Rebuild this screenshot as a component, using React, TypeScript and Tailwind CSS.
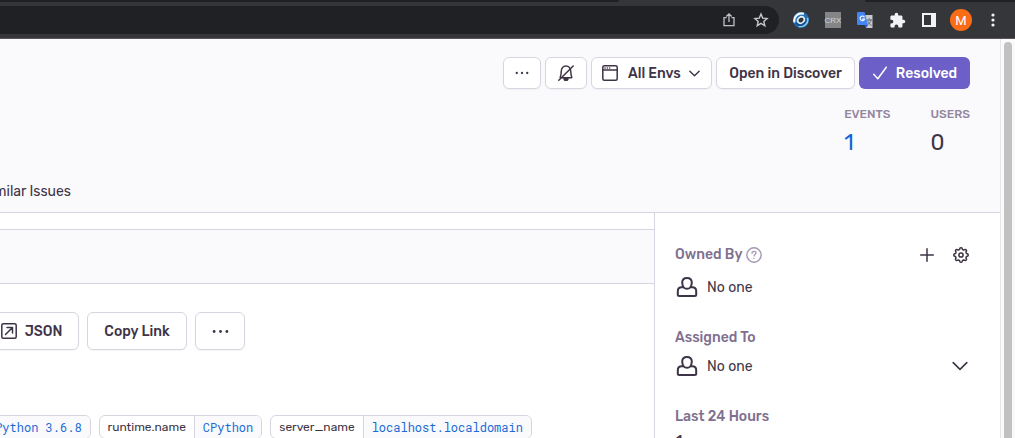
import React from "react";

type IconProps = { className?: string; children: React.ReactNode; box?: number };

function Icon({ className = "size-4", children, box = 16 }: IconProps) {
  return (
    <svg
      aria-hidden="true"
      viewBox={`0 0 ${box} ${box}`}
      className={`shrink-0 ${className}`}
      fill="none"
      stroke="currentColor"
      strokeWidth="1.5"
      strokeLinecap="round"
      strokeLinejoin="round"
    >
      {children}
    </svg>
  );
}

const Dots = ({ className }: { className?: string }) => (
  <Icon className={className}>
    <g fill="currentColor" stroke="none">
      <circle cx="2" cy="8" r="1.3" />
      <circle cx="8" cy="8" r="1.3" />
      <circle cx="14" cy="8" r="1.3" />
    </g>
  </Icon>
);

const Chevron = ({ className, weight = 1.6 }: { className?: string; weight?: number }) => (
  <Icon className={className}>
    <path strokeWidth={weight} d="M1.2 4.6 8 11.4l6.8-6.8" />
  </Icon>
);

const Person = () => (
  <Icon className="size-6" box={24}>
    <path
      strokeWidth="2"
      d="M8.600 12.300C7.700 11.100 7.200 9.500 7.200 7.600 7.200 4.700 9 3 12 3s4.800 1.700 4.800 4.600c0 1.900-.5 3.500-1.400 4.700M8.600 12.300c.9 1 2 1.500 3.400 1.500s2.500-.5 3.400-1.500M8.600 12.300H6.700c-2.500 0-3.900 1.500-3.900 3.900v3.400c0 .9.6 1.500 1.500 1.500h15.400c.9 0 1.500-.6 1.500-1.500v-3.400c0-2.400-1.400-3.900-3.900-3.900h-1.900"
    />
  </Icon>
);

function gearPath() {
  const points: string[] = [];
  for (let i = 0; i <= 96; i++) {
    const a = (i / 96) * Math.PI * 2;
    const r = 6.4 + 0.8 * Math.tanh(2.2 * Math.cos(8 * a));
    points.push(`${(8 + r * Math.cos(a)).toFixed(2)} ${(8 + r * Math.sin(a)).toFixed(2)}`);
  }
  return `M${points.join("L")}Z`;
}

function BrowserBar() {
  const slot = "flex size-8 shrink-0 items-center justify-center";
  return (
    <header className="shrink-0 border-b border-[#5b5459] bg-[#35363a]">
      <div className="flex h-[2px] justify-between">
        <div className="w-[61%] rounded-br-full bg-[#202124]" />
        <div className="w-[150px] rounded-bl-full bg-[#202124]" />
      </div>
      <div className="flex h-9 items-center pr-[6px]">
        <div className="flex h-7 min-w-0 flex-1 items-center rounded-r-full bg-[#202124] pr-[2px]">
          <input aria-label="Address" className="h-7 min-w-0 flex-1 bg-transparent px-3 text-sm text-white outline-none" />
          <button aria-label="Share" className={`${slot} text-[#bdc1c6]`}>
            <Icon>
              <path strokeLinecap="butt" strokeLinejoin="miter" strokeWidth="1.3" d="M5.500 5.700H3v8h10v-8h-2.500M8 10V1.800M5.300 4.500 8 1.800l2.700 2.700" />
            </Icon>
          </button>
          <button aria-label="Bookmark" className={`${slot} text-[#c6c9cc]`}>
            <Icon>
              <path strokeLinejoin="miter" strokeWidth="1.400" d="m8 2 1.700 4.100 4.400.4-3.300 2.900 1 4.300L8 11.400l-3.800 2.300 1-4.300-3.300-2.900 4.400-.4z" />
            </Icon>
          </button>
        </div>
        <div className="ml-[6px] flex items-center">
          <button aria-label="Sync extension" className={slot}>
            <Icon>
              <circle cx="8" cy="8" r="8" fill="#2472b8" stroke="none" />
              <path d="M1.300 9.500C.6 4.800 4.800.7 10 1.600" stroke="#f0f8fd" strokeWidth="2.200" />
              <path d="M14.600 6.500c.8 4.700-3.200 8.600-8.200 7.900" stroke="#8ec9ec" strokeWidth="1.700" />
              <path d="M3.500 11.800c3 2.500 8.500 1.200 9.200-4" stroke="#11518f" strokeWidth="2" />
              <ellipse cx="8" cy="8" rx="3.600" ry="2.900" transform="rotate(-40 8 8)" fill="#35363a" stroke="#e6f5fd" strokeWidth="1.500" />
            </Icon>
          </button>
          <button aria-label="CRX extension" className={slot}>
            <span className="flex size-4 items-center justify-center bg-[#858585] font-['Liberation_Sans',sans-serif] text-[8px] text-[#d4d4d4]">CRX</span>
          </button>
          <button aria-label="Translate" className={slot}>
            <Icon>
              <path d="M7 3h8.500v13H9z" fill="#c9cbce" stroke="none" />
              <path d="M9.500 8H15M12.200 6.700V8M14 8c-.4 2.200-1.800 4-3.800 5M10.800 9.500c.8 1.700 2 3 3.500 3.700" stroke="#5f6f7d" strokeWidth="1" />
              <path d="M1 0h6.500L11 13H1a1 1 0 0 1-1-1V1a1 1 0 0 1 1-1z" fill="#4285f4" stroke="none" />
              <path d="m7.500 13h3.500l-2 3z" fill="#2559c7" stroke="none" />
              <path d="M7.200 4.900A2.300 2.300 0 1 0 7.600 7H5.500" stroke="#fff" strokeWidth="1.100" />
            </Icon>
          </button>
          <button aria-label="Extensions" className={`${slot} text-[#f1f3f4]`}>
            <Icon box={24} className="size-[17px]">
              <path
                fill="currentColor"
                stroke="none"
                d="M20.500 11H19V7c0-1.100-.9-2-2-2h-4V3.500a2.500 2.500 0 0 0-5 0V5H4c-1.100 0-2 .9-2 2v3.800h1.500a2.700 2.700 0 0 1 0 5.400H2V20c0 1.100.9 2 2 2h3.800v-1.500a2.700 2.700 0 0 1 5.400 0V22H17c1.100 0 2-.9 2-2v-4h1.500a2.500 2.500 0 0 0 0-5z"
              />
            </Icon>
          </button>
          <button aria-label="Side panel" className={`${slot} text-[#f1f3f4]`}>
            <Icon>
              <path fill="currentColor" stroke="none" fillRule="evenodd" d="M1 1h14v14H1zM3 3v10h7V3z" />
            </Icon>
          </button>
          <button aria-label="Profile" className={slot}>
            <span className="flex size-[22px] items-center justify-center rounded-full bg-[#fa6d16] font-[Roboto,sans-serif] text-[13px] text-white">M</span>
          </button>
          <button aria-label="Browser menu" className={`${slot} text-[#f1f3f4]`}>
            <Icon>
              <g fill="currentColor" stroke="none">
                <circle cx="8" cy="3" r="1.600" />
                <circle cx="8" cy="8" r="1.600" />
                <circle cx="8" cy="13" r="1.600" />
              </g>
            </Icon>
          </button>
        </div>
      </div>
    </header>
  );
}

const surface = "flex items-center rounded-md border border-[#d9d5e0] bg-white font-medium shadow-[0_1px_1px_rgba(43,34,51,0.04)]";
const box = `${surface} justify-center`;

function IssueHeader() {
  return (
    <section className="border-b border-[#d9d5e0] bg-[#fafafc] pt-[18px]">
      <div className="flex justify-end gap-1 pr-[30px]">
        <button aria-label="More actions" className={`${box} h-8 w-[38px]`}>
          <Dots className="size-[14px]" />
        </button>
        <button aria-label="Mute" className={`${box} h-8 w-[42px]`}>
          <Icon>
            <path d="M2.800 12.700h10.400c.5 0 .7-.3.5-.8-.6-1-.8-2.300-.9-5.200C12.700 3.400 10.800.9 8 .9S3.300 3.400 3.200 6.700c-.1 2.900-.3 4.200-.9 5.200-.2.500 0 .8.500.8z" />
            <path d="M6 13.500a2 2 0 0 0 4 0zM.8 15.200 15.200 1" fill="currentColor" />
          </Icon>
        </button>
        <div className={`${surface} h-8 w-[121px] gap-2 pl-[10px]`}>
          <Icon>
            <rect x=".8" y=".8" width="14.400" height="14.400" rx="1.500" />
            <path d="M.8 5h14.400" />
            <path d="M3 3h.1M5.300 3h.1M7.600 3h.1" />
          </Icon>
          <select aria-label="Environment" className="appearance-none bg-transparent pl-[2px] font-medium outline-none">
            <option>All Envs</option>
          </select>
          <Chevron className="size-[11px]" weight={2} />
        </div>
        <button className={`${box} h-8 w-[139px]`}>Open in Discover</button>
        <button className="flex h-8 w-[111px] items-center justify-center gap-2 rounded-md bg-[#6c5fc7] font-medium text-white">
          <Icon>
            <path d="m1.700 9.300 4.100 4.500L14.300 2.200" />
          </Icon>
          Resolved
        </button>
      </div>
      <dl className="mt-4 flex justify-end gap-10 pr-[30px]">
        <div>
          <dt className="text-[12px] leading-[18px] font-medium text-[#9386a0]">EVENTS</dt>
          <dd className="mt-2 text-[22px] leading-6">
            <a href="#events" className="text-[#0f66d6]">1</a>
          </dd>
        </div>
        <div>
          <dt className="text-[12px] leading-[18px] font-medium text-[#9386a0]">USERS</dt>
          <dd className="mt-2 text-[22px] leading-6">0</dd>
        </div>
      </dl>
      <nav className="mt-6 flex h-[33px] w-[71px] justify-end overflow-hidden whitespace-nowrap">
        <a href="#similar" className="leading-[26px]">Similar Issues</a>
      </nav>
    </section>
  );
}

function Tag({ name, value }: { name: string; value: string }) {
  return (
    <li className="flex h-6 shrink-0 overflow-hidden rounded-md border border-[#d9d5e0] text-[12px] leading-[22px]">
      <span className="px-2">{name}</span>
      <a href="#tag" className="border-l border-[#d9d5e0] bg-[#fafafc] px-2 font-['Roboto_Mono','Liberation_Mono',monospace] text-[#1a6cd8]">
        {value}
      </a>
    </li>
  );
}

function EventColumn() {
  return (
    <main className="min-w-0 flex-1 overflow-hidden">
      <div className="mt-4 h-[55px] border-y border-[#d9d5e0] bg-[#fafafc]" />
      <div className="mt-7 -ml-4 flex gap-2">
        <button className={`${box} h-[38px] w-[95px] gap-2`}>
          <Icon>
            <rect x=".8" y=".8" width="14.400" height="14.400" rx="1.500" />
            <path d="m4.500 11.500 6.800-6.800M6 4.500h5.500V10" />
          </Icon>
          JSON
        </button>
        <button className={`${box} h-[38px] w-[100px]`}>Copy Link</button>
        <button aria-label="More event actions" className={`${box} h-[38px] w-[50px]`}>
          <Dots className="size-[17px]" />
        </button>
      </div>
      <ul className="mt-[65px] -ml-[82px] flex gap-2">
        <Tag name="runtime" value="CPython 3.6.8" />
        <Tag name="runtime.name" value="CPython" />
        <Tag name="server_name" value="localhost.localdomain" />
      </ul>
    </main>
  );
}

function Sidebar() {
  const heading = "font-medium text-[#80708f]";
  return (
    <aside className="w-[346px] shrink-0 border-l border-[#d9d5e0] px-5 pt-[31px]">
      <div className="flex items-center pr-[11px]">
        <h2 className={heading}>Owned By</h2>
        <button aria-label="About ownership" className="ml-1 text-[#a598b4]">
          <Icon>
            <circle cx="8" cy="8" r="7.200" strokeWidth="1.400" />
            <path strokeWidth="1.300" d="M6 6.300c0-1.100.9-1.900 2-1.900s2 .7 2 1.700c0 1.300-2 1.400-2 2.800M8 11.300v.1" />
          </Icon>
        </button>
        <button aria-label="Add owner" className="ml-auto">
          <Icon>
            <path d="M8 1.700v12.600M1.700 8h12.600" />
          </Icon>
        </button>
        <button aria-label="Ownership settings" className="ml-[18px]">
          <Icon>
            <path d={gearPath()} strokeWidth="1.500" />
            <circle cx="8" cy="8" r="2.100" strokeWidth="1.500" />
          </Icon>
        </button>
      </div>
      <div className="mt-[10px] flex items-center gap-2">
        <Person />
        <span>No one</span>
      </div>
      <h2 className={`${heading} mt-7`}>Assigned To</h2>
      <div className="mt-[6px] flex items-center gap-2 pr-3">
        <Person />
        <select aria-label="Assigned To" className="min-w-0 flex-1 appearance-none bg-transparent outline-none">
          <option>No one</option>
        </select>
        <Chevron className="size-4" />
      </div>
      <h2 className={`${heading} mt-7`}>Last 24 Hours</h2>
      <p className="mt-[3px] text-[18px] leading-6">1</p>
    </aside>
  );
}

export default function App() {
  return (
    <div className="flex h-screen flex-col overflow-hidden bg-white font-[Rubik,Roboto,sans-serif] text-[14px] leading-[21px] text-[#3e3446]">
      <BrowserBar />
      <div className="flex min-h-0 flex-1">
        <div className="min-w-0 flex-1 overflow-hidden">
          <IssueHeader />
          <div className="flex min-h-full">
            <EventColumn />
            <Sidebar />
          </div>
        </div>
        <div className="flex w-[15px] shrink-0 justify-center border-l border-[#e6e6e6] bg-[#fafafa] pt-[3px]">
          <div className="h-full w-2 rounded-t-full bg-[#c1c1c1]" />
        </div>
      </div>
    </div>
  );
}
